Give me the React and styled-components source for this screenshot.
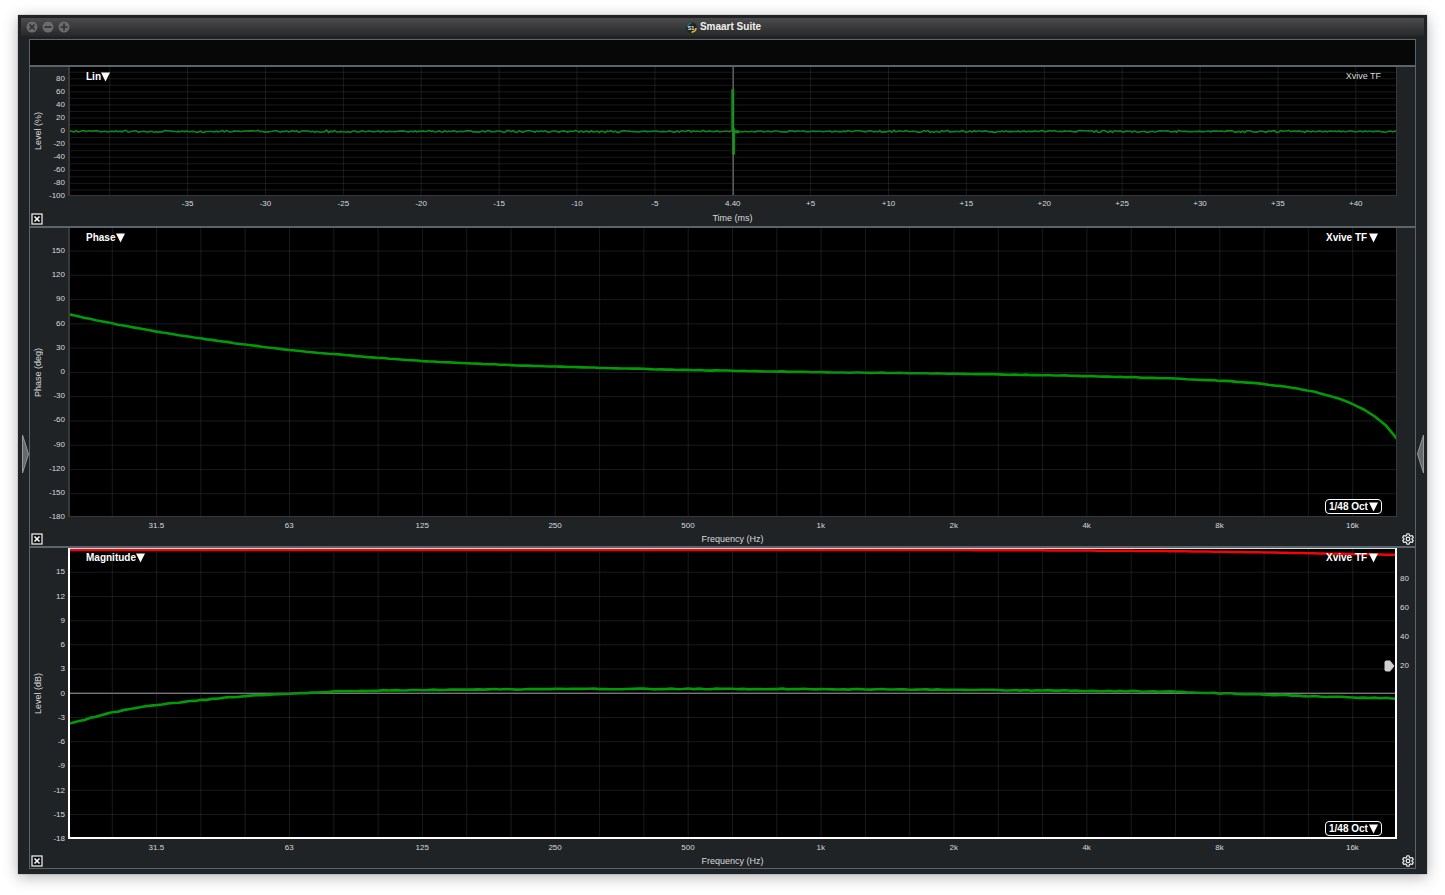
import React from "react";
import styled, { createGlobalStyle } from "styled-components";

const color = {
  shell: "#1f2326",
  line: "#59646b",
  text: "#d8dadb",
  trace: "#009c06",
  coherence: "#fb0007",
};

const GlobalStyle = createGlobalStyle`
  *, *::before, *::after { box-sizing: border-box; }
  body {
    margin: 0;
    background: #fff;
    font-family: "Liberation Sans", Arial, sans-serif;
    color: ${color.text};
  }
  button, select { font: inherit; color: inherit; margin: 0; padding: 0; border: 0; background: none; }
`;

/* ---------- window ---------- */

const Desktop = styled.div`
  padding: 15px 18px 21px;
`;

const Window = styled.main`
  display: flex;
  flex-direction: column;
  height: calc(100vh - 36px);
  min-height: 560px;
  padding: 3px 0 5px;
  background: ${color.shell};
  box-shadow: 0 3px 14px rgba(0, 0, 0, 0.3), 0 0 1px rgba(0, 0, 0, 0.5);
`;

const TitleBar = styled.header`
  display: grid;
  grid-template-columns: 1fr auto 1fr;
  align-items: center;
  flex: none;
  height: 18px;
  margin: 0 3px 3px;
  padding-left: 5px;
  background: linear-gradient(#4b4b4b, #272828);
`;

const WindowButtons = styled.div`
  display: flex;
  gap: 4px;
`;

const WindowButton = styled.button`
  display: flex;
  width: 12px;
  height: 12px;
`;

const Title = styled.h1`
  display: flex;
  align-items: center;
  gap: 3px;
  margin: 0 3px 0 0;
  font-size: 10px;
  line-height: 16px;
  font-weight: bold;
  color: #f0f0f0;
`;

const Body = styled.div`
  display: flex;
  flex: 1;
  min-height: 0;
`;

const Handle = styled.button`
  display: flex;
  align-items: center;
  justify-content: center;
  flex: none;
  width: 11px;
  padding-left: ${(p) => (p.$side === "left" ? 3 : 0)}px;
  padding-right: ${(p) => (p.$side === "right" ? 3 : 0)}px;
`;

const Frame = styled.div`
  display: grid;
  grid-template-rows: 27px minmax(0, 161fr) minmax(0, 321fr) minmax(0, 320fr);
  flex: 1;
  min-width: 0;
  border: 1px solid ${color.line};
`;

const Toolbar = styled.div`
  background: #070707;
  border-bottom: 2px solid ${color.line};
`;

/* ---------- chart panels ---------- */

const Panel = styled.section`
  display: grid;
  grid-template-columns: 38px minmax(0, 1fr) 18px;
  grid-template-rows: minmax(0, 1fr) ${(p) => p.$foot}px;
  border-bottom: 2px solid ${color.line};
  &:last-child { border-bottom: 0; }
`;

const YAxis = styled.div`
  display: flex;
  justify-content: space-between;
  padding-right: 3px;
`;

const YTitle = styled.div`
  align-self: center;
  width: 16px;
  writing-mode: vertical-rl;
  transform: rotate(180deg);
  font-size: 9px;
  line-height: 16px;
  white-space: nowrap;
`;

const YTicks = styled.div`
  display: flex;
  flex-direction: column;
  justify-content: space-between;
  align-items: flex-end;
  padding-top: ${(p) => p.$top}px;
`;

const Tick = styled.span`
  display: flex;
  align-items: center;
  justify-content: ${(p) => (p.$axis === "x" ? "center" : "flex-end")};
  ${(p) => (p.$axis === "x" ? "width: 0" : "height: 0")};
  font-size: 8px;
  line-height: 16px;
  white-space: nowrap;
`;

const RightScale = styled.div`
  display: grid;
  grid-template-rows: repeat(10, 1fr);
  align-items: end;
  justify-items: start;
  padding: 2px 0 0 3px;
`;

const Plot = styled.div`
  display: grid;
  grid-template: minmax(0, 1fr) / minmax(0, 1fr);
  min-height: 0;
  background: #000;
  & > * { grid-area: 1 / 1; }
  &::after {
    content: "";
    grid-area: 1 / 1;
    pointer-events: none;
    border: ${(p) => (p.$selected ? "2px solid #fff" : "1px solid #34393c")};
    border-top: ${(p) => (p.$selected ? "1px solid #d5dbde" : "0")};
    border-left-width: 2px;
  }
`;

const Graph = styled.svg`
  display: block;
  width: 100%;
  height: 100%;
  & path { fill: none; vector-effect: non-scaling-stroke; }
`;

const Corner = styled.div`
  z-index: 1;
  align-self: ${(p) => (p.$bottom ? "end" : "start")};
  justify-self: ${(p) => (p.$right ? "end" : "start")};
  margin: ${(p) => (p.$bottom ? "0 15px 3px" : p.$right ? "2px 19px" : "2px 18px")};
`;

const TraceName = styled.div`
  z-index: 1;
  place-self: start end;
  margin: 1px 16px;
  font-size: 9px;
  line-height: 16px;
`;

const PickerBox = styled.label`
  display: flex;
  align-items: center;
  height: 16px;
  font-size: 10px;
  line-height: 14px;
  font-weight: bold;
  color: #fff;
  ${(p) =>
    p.$boxed &&
    `height: 15px; padding: 0 3px; border: 1px solid #fff; border-radius: 4px; background: #000;`}
`;

const PickerSelect = styled.select`
  appearance: none;
  outline: none;
  line-height: 14px;
  option { background: #000; }
`;

const CaretIcon = styled.svg`
  margin-left: ${(p) => (p.$gap ? 1 : 0)}px;
  pointer-events: none;
`;

const Foot = styled.footer`
  display: grid;
  grid-column: 1 / -1;
  grid-template-columns: 38px minmax(0, 1fr) 18px;
`;

const XAxis = styled.div`
  text-align: center;
`;

const XTicks = styled.div`
  display: flex;
  justify-content: space-between;
  height: 16px;
  padding: 1px ${(p) => p.$right}% 0 ${(p) => p.$left}%;
`;

const XTitle = styled.div`
  font-size: 9px;
  line-height: 12px;
`;

const FootButton = styled.button`
  display: flex;
  align-self: end;
  justify-self: ${(p) => (p.$right ? "end" : "start")};
  margin: 1px;
`;

/* ---------- icons ---------- */

const Caret = ({ gap }) => (
  <CaretIcon $gap={gap} width="9" height="10" viewBox="0 0 9 10" aria-hidden="true">
    <path d="M0 .5h9L4.500 9.500z" fill="#fff" />
  </CaretIcon>
);

const RoundIcon = ({ d }) => (
  <svg width="12" height="12" viewBox="0 0 12 12" aria-hidden="true">
    <circle cx="6" cy="6" r="5.500" fill="#6b6b6b" />
    <path d={d} stroke="#303030" strokeWidth="1.700" fill="none" />
  </svg>
);

const AppIcon = () => (
  <svg width="11" height="11" viewBox="0 0 22 22" aria-hidden="true">
    <circle cx="11" cy="11" r="10.500" fill="#1d2224" />
    <path d="M3 10A8.500 8.500 0 0 1 11 2.500" stroke="#14766f" strokeWidth="3.500" fill="none" />
    <path d="M20 12A9 9 0 0 1 11 20" stroke="#e0b32c" strokeWidth="3.500" fill="none" />
    <text x="10" y="15" fontSize="11" fontWeight="bold" textAnchor="middle" fill="#e4e4e4">S1</text>
  </svg>
);

const CloseIcon = () => (
  <svg width="12" height="12" viewBox="0 0 12 12" aria-hidden="true">
    <rect x="1" y="1" width="10" height="10" fill="#111" stroke="#e8e8e8" strokeWidth="1.300" />
    <path d="M3.500 3.500l5 5M8.500 3.500l-5 5" stroke="#fff" strokeWidth="1.500" />
  </svg>
);

const GearIcon = () => (
  <svg width="12" height="12" viewBox="0 0 24 24" fill="none" stroke="#f0f0f0" strokeWidth="2.400" strokeLinejoin="round" aria-hidden="true">
    <path d="M9.800 1.500h4.400l.7 3.400 2.200 1.300 3.300-1.100 2.200 3.800-2.600 2.300v1.600l2.600 2.300-2.200 3.800-3.300-1.100-2.200 1.300-.7 3.400H9.800l-.7-3.400-2.200-1.300-3.300 1.100-2.200-3.800L4 12.800v-1.600L1.400 8.900l2.200-3.800 3.300 1.100 2.200-1.300z" />
    <circle cx="12" cy="12" r="3.600" />
  </svg>
);

const ArrowIcon = ({ side }) => (
  <svg width="7" height="40" viewBox="0 0 7 40" aria-hidden="true">
    <path
      d={side === "left" ? "M.5 1v38L6.500 20z" : "M6.500 1v38L.5 20z"}
      fill="#66696b"
      stroke="#96999a"
      strokeWidth="1"
    />
  </svg>
);

const Marker = styled.svg`
  z-index: 1;
  place-self: start end;
  margin-right: 2px;
`;

const MarkerTrack = styled.div`
  display: grid;
  grid-template-rows: 5fr 8fr;
  justify-items: end;
  &::before { content: ""; }
`;

/* ---------- data ---------- */

const UNIT = 1000;

// Curve points are [third-octave band above 20 Hz, value].
const phase = [
  [0, 72], [1, 60.4], [2, 50.5], [3, 42], [4, 34.4], [5, 27.8], [6, 22.6], [7, 18], [8, 14.2],
  [9, 11.4], [10, 9], [11, 7.1], [12, 5.6], [13, 4.3], [14, 2.9], [17, 0.3], [20, -1.6], [23, -4.6],
  [25, -7.8], [26, -10.3], [27, -14.5], [28, -22.5], [28.5, -29.5], [29, -39.2], [29.4, -51],
  [29.75, -66], [30, -82],
];

const magnitude = [
  [0, -3.8], [1, -2.4], [2, -1.45], [3, -0.85], [4, -0.35], [5, -0.04], [6, 0.2], [8, 0.42],
  [11, 0.52], [14, 0.54], [17, 0.52], [20, 0.44], [23, 0.3], [25, 0.18], [26, 0], [27, -0.16],
  [29, -0.52], [30, -0.62],
];

const coherence = [[0, 17.74], [20, 17.74], [23, 17.68], [25, 17.6], [27, 17.45], [29, 17.25], [30, 17.15]];

const noise = (i) => {
  const n = Math.sin(i * 127.1 + 11.7) * 43758.5453;
  return (n - Math.floor(n)) * 2 - 1;
};

function sample(points, band) {
  let k = 0;
  while (k < points.length - 2 && band > points[k + 1][0]) k += 1;
  const slope = (a, b) => (b[1] - a[1]) / (b[0] - a[0]);
  const p = points[k];
  const q = points[k + 1];
  const m0 = slope(points[Math.max(k - 1, 0)], q);
  const m1 = slope(p, points[Math.min(k + 2, points.length - 1)]);
  const h = q[0] - p[0];
  const t = (band - p[0]) / h;
  return (
    (2 * t ** 3 - 3 * t ** 2 + 1) * p[1] + (t ** 3 - 2 * t ** 2 + t) * h * m0 +
    (3 * t ** 2 - 2 * t ** 3) * q[1] + (t ** 3 - t ** 2) * h * m1
  );
}

const scaleY = ([top, bottom]) => (v) => ((top - v) / (top - bottom)) * UNIT;

function curve(points, range, ripple = 0) {
  const y = scaleY(range);
  return Array.from({ length: 241 }, (_, i) => {
    const band = i / 8;
    const v = sample(points, band) + noise(i) * ripple;
    return `${i ? "L" : "M"}${((band / 30) * UNIT).toFixed(2)} ${y(v).toFixed(2)}`;
  }).join("");
}

const impulseRange = [98, -99];
const phaseRange = [178.5, -179.5];
const levelRange = [18, -18];

const impulseNoise = Array.from({ length: 664 }, (_, i) => {
  const y = scaleY(impulseRange)(-0.5 + noise(i) * 1.3 * (0.5 + Math.abs(noise(Math.floor(i / 9)))));
  return `${i ? "L" : "M"}${((i / 663) * UNIT).toFixed(2)} ${y.toFixed(2)}`;
}).join("");

const range = (from, to, step) => {
  const out = [];
  for (let v = from; step > 0 ? v <= to : v >= to; v += step) out.push(v);
  return out;
};

const bandLines = range(1, 29, 1).map((i) => (i / 30) * UNIT);
const timeLines = range(0, 16, 1).map((i) => 31.4 + i * 58.6);

const frequencies = ["31.5", "63", "125", "250", "500", "1k", "2k", "4k", "8k", "16k"];
const times = range(-35, 40, 5).map((t) => (t === 0 ? "4.40" : t > 0 ? `+${t}` : `${t}`));

/* ---------- composition ---------- */

function Picker({ label, value, boxed, gap }) {
  return (
    <PickerBox $boxed={boxed}>
      <PickerSelect aria-label={label} defaultValue={value}>
        <option>{value}</option>
      </PickerSelect>
      <Caret gap={gap} />
    </PickerBox>
  );
}

function Grid({ columns, rows, yRange }) {
  const y = scaleY(yRange);
  return (
    <>
      <path d={columns.map((x) => `M${x} 0V${UNIT}`).join("")} stroke="rgba(72,78,78,.34)" strokeWidth="1" />
      <path d={rows.map((v) => `M0 ${y(v)}H${UNIT}`).join("")} stroke="rgba(72,78,78,.34)" strokeWidth="1" />
    </>
  );
}

function ChartPanel({ name, yTitle, yTicks, yTop, xTitle, xTicks, xLeft, xRight, foot, selected, settings, scale, plot }) {
  return (
    <Panel $foot={foot} aria-label={name}>
      <YAxis>
        <YTitle>{yTitle}</YTitle>
        <YTicks $top={yTop}>
          {yTicks.map((t) => <Tick key={t} $axis="y">{t}</Tick>)}
        </YTicks>
      </YAxis>
      <Plot $selected={selected}>{plot}</Plot>
      {scale ? (
        <RightScale>
          {scale.map((t) => <Tick key={t} $axis="y">{t}</Tick>)}
        </RightScale>
      ) : (
        <div />
      )}
      <Foot>
        <FootButton aria-label={`Close ${name}`}><CloseIcon /></FootButton>
        <XAxis>
          <XTicks $left={xLeft} $right={xRight}>
            {xTicks.map((t) => <Tick key={t} $axis="x">{t}</Tick>)}
          </XTicks>
          <XTitle>{xTitle}</XTitle>
        </XAxis>
        {settings && (
          <FootButton $right aria-label={`${name} settings`}><GearIcon /></FootButton>
        )}
      </Foot>
    </Panel>
  );
}

function PlotGraph({ label, children }) {
  return (
    <Graph viewBox={`0 0 ${UNIT} ${UNIT}`} preserveAspectRatio="none" role="img" aria-label={label}>
      {children}
    </Graph>
  );
}

function FrequencyPickers({ kind }) {
  return (
    <>
      <Corner><Picker label="Plot type" value={kind} /></Corner>
      <Corner $right><Picker label="Trace" value="Xvive TF" gap /></Corner>
      <Corner $right $bottom><Picker label="Smoothing" value="1/48 Oct" boxed gap /></Corner>
    </>
  );
}

export default function App() {
  const impulseY = scaleY(impulseRange);
  return (
    <Desktop>
      <GlobalStyle />
      <Window>
        <TitleBar>
          <WindowButtons>
            <WindowButton aria-label="Close"><RoundIcon d="M3.500 3.500l5 5M8.500 3.500l-5 5" /></WindowButton>
            <WindowButton aria-label="Minimize"><RoundIcon d="M2.500 6h7" /></WindowButton>
            <WindowButton aria-label="Zoom"><RoundIcon d="M2.500 6h7M6 2.500v7" /></WindowButton>
          </WindowButtons>
          <Title><AppIcon />Smaart Suite</Title>
        </TitleBar>
        <Body>
          <Handle $side="left" aria-label="Show left panel"><ArrowIcon side="left" /></Handle>
          <Frame>
            <Toolbar />
            <ChartPanel
              name="Impulse response"
              yTitle="Level (%)"
              yTicks={range(80, -100, -20)}
              yTop={12}
              xTitle="Time (ms)"
              xTicks={times}
              xLeft={9}
              xRight={3.1}
              foot={30}
              plot={
                <>
                  <PlotGraph label="Impulse response">
                    <path d={`M500.500 0V${UNIT}`} stroke="#777" strokeWidth="1" />
                    <path d={impulseNoise} stroke="#0a8f10" strokeWidth="1.600" />
                    <path d={`M500.200 ${impulseY(64)}V${impulseY(0)}`} stroke={color.trace} strokeWidth="3" />
                    <path d={`M500.800 ${impulseY(4)}V${impulseY(-36)}`} stroke={color.trace} strokeWidth="3" />
                    <path d={`M501 ${impulseY(-1)}H505`} stroke={color.trace} strokeWidth="3" />
                    <path d={`M500.500 0V${UNIT}`} stroke="rgba(140,140,140,.4)" strokeWidth="1" />
                    <Grid columns={timeLines} rows={range(90, -90, -10)} yRange={impulseRange} />
                  </PlotGraph>
                  <Corner><Picker label="Scale" value="Lin" /></Corner>
                  <TraceName>Xvive TF</TraceName>
                </>
              }
            />
            <ChartPanel
              name="Phase"
              yTitle="Phase (deg)"
              yTicks={range(150, -180, -30)}
              yTop={23}
              xTitle="Frequency (Hz)"
              xTicks={frequencies}
              xLeft={6.65}
              xRight={3.35}
              foot={29}
              settings
              plot={
                <>
                  <PlotGraph label="Phase against frequency">
                    <path d={curve(phase, phaseRange, 0.3)} stroke={color.trace} strokeWidth="2.600" />
                    <Grid columns={bandLines} rows={range(150, -150, -30)} yRange={phaseRange} />
                  </PlotGraph>
                  <FrequencyPickers kind="Phase" />
                </>
              }
            />
            <ChartPanel
              name="Magnitude"
              yTitle="Level (dB)"
              yTicks={range(15, -18, -3)}
              yTop={24}
              xTitle="Frequency (Hz)"
              xTicks={frequencies}
              xLeft={6.65}
              xRight={3.35}
              foot={29}
              settings
              selected
              scale={[80, 60, 40, 20]}
              plot={
                <>
                  <PlotGraph label="Magnitude against frequency">
                    <path d={`M0 ${UNIT / 2}H${UNIT}`} stroke="#b5b5b5" strokeWidth="1" />
                    <path d={curve(coherence, levelRange)} stroke={color.coherence} strokeWidth="2.500" />
                    <path d={curve(magnitude, levelRange, 0.05)} stroke={color.trace} strokeWidth="2.600" />
                    <Grid columns={bandLines} rows={range(15, -15, -3)} yRange={levelRange} />
                  </PlotGraph>
                  <MarkerTrack>
                    <Marker width="11" height="12" viewBox="0 0 11 12" aria-hidden="true">
                      <path d="M2.500.5H6L10.500 6 6 11.500H2.500Q.5 11.500.5 9.500V2.500Q.5.5 2.500.5z" fill="#d0d0d0" />
                    </Marker>
                  </MarkerTrack>
                  <FrequencyPickers kind="Magnitude" />
                </>
              }
            />
          </Frame>
          <Handle $side="right" aria-label="Show right panel"><ArrowIcon side="right" /></Handle>
        </Body>
      </Window>
    </Desktop>
  );
}
